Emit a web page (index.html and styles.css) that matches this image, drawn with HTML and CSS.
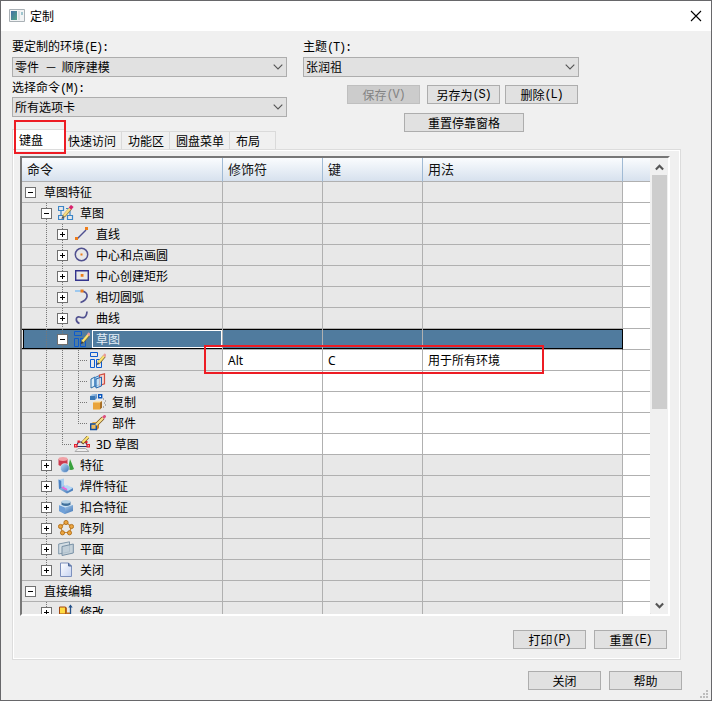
FILE: index.html
```html
<!DOCTYPE html>
<html lang="zh-CN">
<head>
<meta charset="utf-8">
<title>定制</title>
<link rel="stylesheet" href="styles.css">
</head>
<body>
<svg width="0" height="0" class="defs">
  <defs>
    <linearGradient id="blue" x1="0" y1="0" x2="1" y2="1"><stop offset="0" stop-color="#c4e2f8"/><stop offset="1" stop-color="#3a70b4"/></linearGradient>
    <linearGradient id="gold" x1="0" y1="0" x2="1" y2="1"><stop offset="0" stop-color="#ffe9b0"/><stop offset="1" stop-color="#d98a1c"/></linearGradient>
    <linearGradient id="page" x1="0" y1="0" x2="1" y2="1"><stop offset="0" stop-color="#ffffff"/><stop offset="1" stop-color="#c5d3f2"/></linearGradient>
    <symbol id="sketchgroup" viewBox="0 0 16 16">
      <path d="M.500 1.500h5v4h-5zM.500 10.500h5v4h-5zM9.500 10.500h5v4h-5zM3 5.500v5M8 3.500h4v7" fill="none" stroke="#3c86c8" stroke-width="1.200"/>
      <path d="M5.500 11.500 12.500 3.500" stroke="#8b7a41" stroke-width="3.400"/>
      <path d="M5.800 10.800 12.500 3" stroke="#f7dc83" stroke-width="2.400"/>
      <path d="M12 3.700 14.300 1" stroke="#d9206e" stroke-width="3.400"/>
      <path d="M3.500 14 4.300 11 6.500 13z" fill="#555"/>
    </symbol>
    <symbol id="sketch" viewBox="0 0 16 16">
      <path d="M.500.500h7v4h-7zM.500 7.500h4v8h-4zM6.500 7.500h5v8h-5z" fill="none" stroke="#0b5ad0"/>
      <path d="M8.500 11 14.500 4" stroke="#7a6a3a" stroke-width="3.200"/>
      <path d="M8.500 10.500 14.500 3.500" stroke="#fbe36e" stroke-width="2.200"/>
      <path d="M14 4.200 15.800 2.300" stroke="#e89a9a" stroke-width="3"/>
      <path d="M6.500 13 7.700 10.500 9.500 12z" fill="#333"/>
    </symbol>
    <symbol id="line" viewBox="0 0 16 16">
      <path d="M3 13 12 4" stroke="#50508f" stroke-width="1.400"/><path d="M1 11h3v3H1zM11 1h3v3h-3z" fill="#ee7d1a"/>
    </symbol>
    <symbol id="circle" viewBox="0 0 16 16">
      <circle cx="7.500" cy="7.500" r="6.200" fill="none" stroke="#50508f" stroke-width="1.500"/><path d="M6.500 6.500h2v2h-2z" fill="#ee7d1a"/>
    </symbol>
    <symbol id="rect" viewBox="0 0 16 16">
      <path d="M1.700 2.700h12.600v9.600H1.700z" fill="none" stroke="#34348d" stroke-width="1.400"/><path d="M6.700 6h2.800v2.800H6.700z" fill="#ee7d1a"/>
    </symbol>
    <symbol id="arc" viewBox="0 0 16 16">
      <path d="M1 2h7" stroke="#55aaf5"/><path d="M8 2C15 3.500 15 10.500 6.500 13.500" fill="none" stroke="#50508f" stroke-width="1.700"/><path d="M6.500.500h3v3h-3z" fill="#ee7d1a"/>
    </symbol>
    <symbol id="curve" viewBox="0 0 16 16">
      <path d="M5.500 13.500C1 12 1.500 6 5.500 7 9.500 8.500 12.500 8 13 1.500" fill="none" stroke="#50508f" stroke-width="1.700"/>
    </symbol>
    <symbol id="split" viewBox="0 0 16 16">
      <path d="M1 6 5 4v9l-4 2z" fill="#dceefa" stroke="#2d6ca5"/>
      <path d="M5 4.500 9.500 2.500v9L5 13.500z" fill="#cde4f5" stroke="#2d78c0"/>
      <path d="M9.500 2 14.500.800v10l-5 1.700z" fill="#f6d5cd" stroke="#cf4e43" stroke-width="1.200"/>
      <path d="M6 6 11.500 4v9L6 15z" fill="#c0e2f6" fill-opacity=".7" stroke="#2467b0"/>
    </symbol>
    <symbol id="copy" viewBox="0 0 16 16">
      <path d="M0 2 2 0h5v4L5 6H0z" fill="url(#blue)"/><path d="M0 2h5v4H0z" fill="#3977b4"/>
      <path d="M8.700.700h3v3h-3z" fill="#fff" stroke="#0754bb" stroke-width="1.400"/>
      <path d="M3 8.500 5 7h7v6.500l-2 2H3z" fill="#fbe3b0"/><path d="M3 8.500h7v7H3z" fill="#e9a43c"/><path d="m10 8.500 2-1.500v6.500l-2 2z" fill="#a87028"/>
      <path d="M13 5h1M15 7h1M14 9h1M15 11h1M13 13h1" stroke="#777"/>
    </symbol>
    <symbol id="part" viewBox="0 0 16 16">
      <path d="m1 8.500 2-1.500h5l-1 2v6H1z" fill="#e7ac45"/><path d="m7 9 2-2v6l-2 2z" fill="#c98423"/>
      <path d="M.700 9h5.600v5.500H.700z" fill="#f0bc5d" stroke="#124fa1" stroke-width="1.400"/>
      <path d="M7 9 13 3" stroke="#76511d" stroke-width="3.800"/><path d="M6 10 13.500 2.500" stroke="#f9e08a" stroke-width="2.300"/><path d="M13 3 15.500.500" stroke="#dc5280" stroke-width="2.800"/>
    </symbol>
    <symbol id="sketch3d" viewBox="0 0 16 16">
      <path d="M4 12.500h7.500L15 15.500H1z" fill="#eee" stroke="#aaa"/>
      <path d="M2 10.500h12M2 10.500 4.500 6h7L14 10.500" fill="none" stroke="#27356d" stroke-width="1.100"/>
      <path d="M.600 8.600h2.300v2.300H.600zM13.100 8.600h2.300v2.300h-2.300z" fill="#fff" stroke="#e8202c" stroke-width="1.200"/><path d="M3.500 4.500h2.300v2.300H3.500zM11 5h2.500v2.300H11z" fill="#e8202c"/>
      <path d="M8 7.500 14 1" stroke="#705021" stroke-width="3.300"/><path d="M8.500 6.500 14.500.500" stroke="#fbe36e" stroke-width="2.100"/>
    </symbol>
    <symbol id="feature" viewBox="0 0 16 16">
      <path d="M.500 2v6q4.500 3 9 0V2z" fill="#cc3a4e"/><ellipse cx="5" cy="2" rx="4.500" ry="1.900" fill="#f1a1a6"/>
      <path d="M12 2 16 12q-3 2-6 0z" fill="#38a13d"/><circle cx="6.800" cy="11" r="4.500" fill="url(#blue)" stroke="#eef4fa" stroke-width=".5"/>
    </symbol>
    <symbol id="weld" viewBox="0 0 16 16">
      <path d="M.500 1.500 6 .500v7l9 2.500v2.500l-6 3L1 11z" fill="url(#blue)"/><path d="m4 9.500 5-2.500 6 3-5 3z" fill="#b6d8f5"/><path d="m4 9 5 2.800" stroke="#ee65da" stroke-width="1.800"/><path d="M.500 1.500 3.500 3v7L1 11z" fill="#4d83c4"/><path d="M3.500 2.500 6 1v6.500l-2.500 2z" fill="#a8d0f2"/>
    </symbol>
    <symbol id="snap" viewBox="0 0 16 16">
      <path d="M1 6v6l6 3 8-3V6z" fill="url(#blue)"/><path d="M1 6 7 8.500V15l-6-3z" fill="#6fa0d8"/><path d="m1 6 6 2.500L15 6 8 4z" fill="#d1e5f4"/>
      <path d="M3.500 2.800v3q4.500 2.500 9 0v-3z" fill="#41719c"/><ellipse cx="8" cy="2.800" rx="4.500" ry="1.800" fill="#b8d3e6"/>
    </symbol>
    <symbol id="pattern" viewBox="0 0 16 16">
      <path d="M8 2.500 13.500 6.500 11.500 12.500h-7L2.500 6.500z" fill="none" stroke="#c98a3a" stroke-width="1.200"/>
      <g fill="#eaa440" stroke="#a9650c" stroke-width=".8"><circle cx="8" cy="2.500" r="2.100"/><circle cx="13.500" cy="6.500" r="2.100"/><circle cx="11.500" cy="12.800" r="2.100"/><circle cx="4.500" cy="12.800" r="2.100"/><circle cx="2.500" cy="6.500" r="2.100"/></g>
    </symbol>
    <symbol id="plane" viewBox="0 0 16 16">
      <path d="M.700 3 11.500.800v10L.700 13z" fill="#d3dde4" stroke="#8198aa"/><path d="M4 5.500 15.300 3v9L4 14.500z" fill="#bccbd5" fill-opacity=".8" stroke="#7890a5"/>
    </symbol>
    <symbol id="close-doc" viewBox="0 0 16 16">
      <path d="M2.500 1h8L13.500 4v10.500h-11z" fill="url(#page)" stroke="#7c90bd"/><path d="M10.500 1v3h3" fill="#6b86b8" stroke="#526b98"/>
    </symbol>
    <symbol id="modify" viewBox="0 0 16 16">
      <path d="M1.500 3h6v7h-6z" fill="#ffdc43" stroke="#a44912"/><path d="M7.500 3.500h1.500V10H7.500zM9 8.500h3V10H9z" fill="#c07020"/><path d="M12.500 10V2" stroke="#224f88" stroke-width="1.300"/><path d="m10.300 3.500 2.200-3 2.200 3z" fill="#224f88"/>
    </symbol>
    <symbol id="down" viewBox="0 0 10 6"><path d="M.7.700 5 5 9.300.700" fill="none" stroke="#555" stroke-width="1.100"/></symbol>
  </defs>
</svg>

<div class="window">
  <header class="titlebar">
    <svg class="appicon" viewBox="0 0 16 14"><defs><linearGradient id="app" x1="0" y1="0" x2="1" y2="1"><stop offset="0" stop-color="#3f70a5"/><stop offset="1" stop-color="#53a486"/></linearGradient></defs><path d="M.5.500h15v12H.500z" fill="#f2f4f5" stroke="#a9b0b5"/><path d="M2 2h6v9H2z" fill="url(#app)"/><path d="M9 2h2v9H9z" fill="#d9e0e4"/><path d="M12 3h2v3h-2z" fill="#9fc6cf"/></svg>
    <span class="title">定制</span>
    <svg class="closex" viewBox="0 0 12 12"><path d="M1 1 11 11M11 1 1 11" stroke="#000" stroke-width="1.100"/></svg>
  </header>

  <section class="top">
    <div class="left">
      <div class="label">要定制的环境<span class="a">(E):</span></div>
      <div class="select"><span>零件<span class="a"> － </span>顺序建模</span><svg><use href="#down"/></svg></div>
      <div class="label second">选择命令<span class="a">(M):</span></div>
      <div class="select"><span>所有选项卡</span><svg><use href="#down"/></svg></div>
    </div>
    <div class="right">
      <div class="label">主题<span class="a">(T):</span></div>
      <div class="select"><span>张润祖</span><svg><use href="#down"/></svg></div>
      <div class="buttons">
        <div class="btn disabled">保存<span class="a">(V)</span></div>
        <div class="btn">另存为<span class="a">(S)</span></div>
        <div class="btn">删除<span class="a">(L)</span></div>
      </div>
      <div class="btn wide">重置停靠窗格</div>
    </div>
  </section>

  <nav class="tabs">
    <div class="tab active">键盘</div>
    <div class="tab t2">快速访问</div>
    <div class="tab t3">功能区</div>
    <div class="tab t4">圆盘菜单</div>
    <div class="tab t5">布局</div>
  </nav>

  <section class="panel">
    <div class="listview">
      <div class="table">
        <div class="row head"><b>命令</b><b>修饰符</b><b>键</b><b>用法</b><b></b></div>
        <div class="row group"><div class="cmd"><i class="box minus"></i><span class="root">草图特征</span></div><p></p><p></p><p></p><p></p></div>
        <div class="row group"><div class="cmd"><i></i><i class="box minus line"></i><svg><use href="#sketchgroup"/></svg><span>草图</span></div><p></p><p></p><p></p><p></p></div>
        <div class="row group"><div class="cmd"><i></i><i class="line"></i><i class="box line"></i><svg><use href="#line"/></svg><span>直线</span></div><p></p><p></p><p></p><p></p></div>
        <div class="row group"><div class="cmd"><i></i><i class="line"></i><i class="box line"></i><svg><use href="#circle"/></svg><span>中心和点画圆</span></div><p></p><p></p><p></p><p></p></div>
        <div class="row group"><div class="cmd"><i></i><i class="line"></i><i class="box line"></i><svg><use href="#rect"/></svg><span>中心创建矩形</span></div><p></p><p></p><p></p><p></p></div>
        <div class="row group"><div class="cmd"><i></i><i class="line"></i><i class="box line"></i><svg><use href="#arc"/></svg><span>相切圆弧</span></div><p></p><p></p><p></p><p></p></div>
        <div class="row group"><div class="cmd"><i></i><i class="line"></i><i class="box line"></i><svg><use href="#curve"/></svg><span>曲线</span></div><p></p><p></p><p></p><p></p></div>
        <div class="row group selected"><div class="cmd"><i></i><i class="line"></i><i class="box minus line"></i><svg><use href="#sketch"/></svg><span class="edit">草图</span></div><p></p><p></p><p></p><p></p></div>
        <div class="row"><div class="cmd"><i></i><i class="line"></i><i class="line"></i><i class="line tee"></i><svg><use href="#sketch"/></svg><span>草图</span></div><p>Alt</p><p>C</p><p>用于所有环境</p><p></p></div>
        <div class="row"><div class="cmd"><i></i><i class="line"></i><i class="line"></i><i class="line tee"></i><svg><use href="#split"/></svg><span>分离</span></div><p></p><p></p><p></p><p></p></div>
        <div class="row"><div class="cmd"><i></i><i class="line"></i><i class="line"></i><i class="line tee"></i><svg><use href="#copy"/></svg><span>复制</span></div><p></p><p></p><p></p><p></p></div>
        <div class="row"><div class="cmd"><i></i><i class="line"></i><i class="line"></i><i class="line tee last"></i><svg><use href="#part"/></svg><span>部件</span></div><p></p><p></p><p></p><p></p></div>
        <div class="row"><div class="cmd"><i></i><i class="line"></i><i class="line tee last"></i><svg><use href="#sketch3d"/></svg><span>3D 草图</span></div><p></p><p></p><p></p><p></p></div>
        <div class="row group"><div class="cmd"><i></i><i class="box line"></i><svg><use href="#feature"/></svg><span>特征</span></div><p></p><p></p><p></p><p></p></div>
        <div class="row group"><div class="cmd"><i></i><i class="box line"></i><svg><use href="#weld"/></svg><span>焊件特征</span></div><p></p><p></p><p></p><p></p></div>
        <div class="row group"><div class="cmd"><i></i><i class="box line"></i><svg><use href="#snap"/></svg><span>扣合特征</span></div><p></p><p></p><p></p><p></p></div>
        <div class="row group"><div class="cmd"><i></i><i class="box line"></i><svg><use href="#pattern"/></svg><span>阵列</span></div><p></p><p></p><p></p><p></p></div>
        <div class="row group"><div class="cmd"><i></i><i class="box line"></i><svg><use href="#plane"/></svg><span>平面</span></div><p></p><p></p><p></p><p></p></div>
        <div class="row group"><div class="cmd"><i></i><i class="box line last"></i><svg><use href="#close-doc"/></svg><span>关闭</span></div><p></p><p></p><p></p><p></p></div>
        <div class="row group"><div class="cmd"><i class="box minus"></i><span class="root">直接编辑</span></div><p></p><p></p><p></p><p></p></div>
        <div class="row group"><div class="cmd"><i></i><i class="box line"></i><svg><use href="#modify"/></svg><span>修改</span></div><p></p><p></p><p></p><p></p></div>
      </div>
      <div class="scroll">
        <svg viewBox="0 0 8 6"><path d="M.8 4.800 4 1.500 7.200 4.800" fill="none" stroke="#555" stroke-width="1.900"/></svg>
        <div class="thumb"></div>
        <svg class="bottom" viewBox="0 0 8 6"><path d="M.8 1.200 4 4.500 7.200 1.200" fill="none" stroke="#555" stroke-width="1.900"/></svg>
      </div>
    </div>
    <div class="panelbuttons"><div class="btn">打印<span class="a">(P)</span></div><div class="btn">重置<span class="a">(E)</span></div></div>
  </section>
  <footer class="footer"><div class="btn">关闭</div><div class="btn">帮助</div></footer>

  <svg class="grip" viewBox="0 0 8 8"><path d="M6 0h2v2H6zM3 3h2v2H3zM6 3h2v2H6zM0 6h2v2H0zM3 6h2v2H3zM6 6h2v2H6z" fill="#bdbdbd"/></svg>
  <div class="mark mark-tab"></div>
  <div class="mark mark-row"></div>
</div>
</body>
</html>
```
FILE: styles.css
```css
*, *::before, *::after { box-sizing: border-box; }
body { margin: 0; overflow: hidden; font: 12px/20px "Noto Sans CJK SC", sans-serif; color: #000; }
.defs { position: absolute; }
.window { position: relative; width: 712px; height: 701px; border: 1px solid #67676a; background: #f0f0f0; display: flex; flex-direction: column; overflow: hidden; }
.titlebar { height: 30px; flex: none; background: #fff; display: flex; align-items: center; padding: 0 9px 0 8px; }
.appicon { width: 16px; height: 14px; }
.title { margin-left: 5px; flex: 1; line-height: 28px; }
.closex { width: 12px; height: 12px; }

.a { font: 12px/12px "Liberation Mono", monospace; letter-spacing: -1.2px; white-space: pre; }
.top { height: 98px; flex: none; display: flex; gap: 16px; padding: 6px 0 0 11px; }
.left { width: 275px; }
.right { width: 276px; }
.label { height: 20px; line-height: 18px; white-space: nowrap; }
.label.second { line-height: 19px; }
.select { height: 20px; border: 1px solid #adadad; background: #e1e1e1; display: flex; align-items: center; justify-content: space-between; padding: 0 3px 0 2px; line-height: 18px; white-space: nowrap; }
.select svg { width: 10px; height: 6px; }
.btn { width: 73px; height: 19px; border: 1px solid #adadad; background: #e1e1e1; display: flex; align-items: center; justify-content: center; line-height: 16px; white-space: nowrap; }
.btn.disabled { background: #ccc; border-color: #bfbfbf; color: #838383; }
.buttons { display: flex; gap: 7px; padding: 8px 0 9px 44px; }
.buttons .btn:last-child { margin-left: -2px; }
.btn.wide { width: 120px; margin-left: 101px; }

.tabs { height: 20px; flex: none; display: flex; align-items: flex-end; padding-left: 11px; }
.tab { height: 18px; border: 1px solid #dadada; border-width: 1px 1px 0 0; line-height: 18px; white-space: nowrap; padding-left: 6px; }
.tab.active { width: 53px; height: 22px; margin-bottom: -2px; background: #fff; border-left-width: 1px; line-height: 19px; padding-left: 6px; }
.t2 { width: 57px; padding-left: 3px; }
.t3 { width: 48px; }
.t4 { width: 60px; }
.t5 { width: 46px; }

.panel { width: 669px; height: 511px; flex: none; margin-left: 11px; border: 1px solid #dcdcdc; box-shadow: inset -1px -1px #fff, inset 1px 1px #fff; padding: 6px 0 0 7px; }
.listview { width: 650px; height: 460px; display: flex; border: 2px solid; border-color: #777 #fff #fff #777; box-shadow: inset -1px -1px #e3e3e3; overflow: hidden; }
.table { width: 629px; height: 456px; overflow: hidden; font-family: "Noto Sans", "Noto Sans CJK SC", sans-serif; }
.row { height: 21px; display: grid; grid-template-columns: 201px 100px 100px 200px 27px; background: #fff; margin-right: 1px; }
.row > * { margin: 0; border-right: 1px solid #b0b0b0; border-bottom: 1px solid #b0b0b0; white-space: nowrap; overflow: hidden; }
.row > :last-child { border-right: 0; }
.row > p { padding-left: 5px; line-height: 22px; }
.group > p:not(:last-child) { background: #e8e8e8; }
.row.head { height: 24px; background: linear-gradient(#fafcfe, #d5e0ed); }
.head b { font-weight: 400; font-size: 13px; line-height: 22px; padding-left: 5px; color: #111; border-right-color: #a0bad4; }
.cmd { display: flex; align-items: center; background: #e8e8e8; line-height: 20px; }
.cmd i { position: relative; width: 16px; height: 20px; flex: none; }
.cmd svg { width: 16px; height: 16px; flex: none; margin: 0 6px 0 4px; }
.cmd span { line-height: 18px; margin-top: 2px; }
.cmd .root { margin-left: 6px; }
.line { background: repeating-linear-gradient(#777 0 1px, transparent 1px 2px) 8px 0 / 1px 100% no-repeat; }
.line.last { background-size: 1px 11px; }
.tee::after { content: ""; position: absolute; left: 8px; top: 10px; width: 9px; height: 1px; background: repeating-linear-gradient(90deg, #777 0 1px, transparent 1px 2px); }
.box::before { content: ""; position: absolute; left: 3px; top: 5px; width: 11px; height: 11px; border: 1px solid #707070; background: linear-gradient(#000, #000) center / 5px 1px no-repeat, linear-gradient(#000, #000) center / 1px 5px no-repeat, #fff; }
.box.minus::before { background: linear-gradient(#000, #000) center / 5px 1px no-repeat, #fff; }

.selected .cmd, .selected > p:not(:last-child) { background: #507b9e; box-shadow: inset 0 1px #000, inset 0 -1px #000; }
.selected .cmd { box-shadow: inset 0 1px #000, inset 0 -1px #000, inset 1px 0 #e8e8e8, inset 2px 0 #000; }
.selected > p:nth-child(4) { border-right-color: #000; }
.cmd .edit { width: 130px; height: 18px; line-height: 18px; margin-top: 0; margin-left: -4px; padding-left: 3px; border: 1px solid #fff; color: #e3eef7; }

.scroll { width: 17px; height: 456px; background: #f0f0f0; display: flex; flex-direction: column; align-items: center; }
.scroll svg { width: 9px; height: 7px; margin: 6px 0 4px; flex: none; }
.thumb { width: 15px; height: 234px; background: #cdcdcd; }
.scroll svg.bottom { margin: auto 0 5px; }
.panelbuttons { display: flex; gap: 8px; margin: 14px 0 0 493px; }
.footer { display: flex; gap: 8px; margin: 11px 0 0 527px; }
.grip { position: absolute; right: 3px; bottom: 2px; width: 8px; height: 8px; }
.mark { position: absolute; border: 2px solid #ed1c24; }
.mark-tab { left: 13px; top: 119px; width: 52px; height: 34px; }
.mark-row { left: 203px; top: 344px; width: 340px; height: 29px; }
```
